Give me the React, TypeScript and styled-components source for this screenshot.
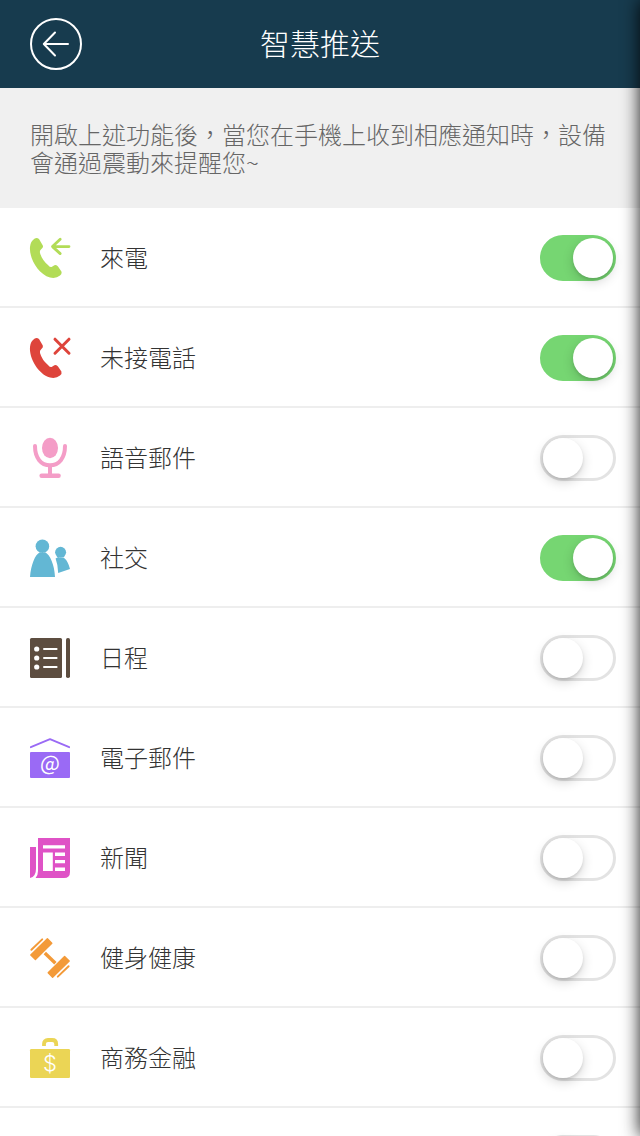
import React, { useState } from 'react';
import styled, { createGlobalStyle } from 'styled-components';

const GlobalStyle = createGlobalStyle`
  *, *::before, *::after { box-sizing: border-box; }
  body {
    margin: 0;
    background: #fff;
    font-family: "Noto Sans CJK TC", "Noto Sans", sans-serif;
    font-weight: 300;
    color: #333;
  }
`;

const Screen = styled.div`
  display: flex;
  flex-direction: column;
  height: 100vh;
  overflow: hidden;
`;

const Header = styled.header`
  flex: none;
  display: grid;
  grid-template-columns: 1fr auto 1fr;
  align-items: center;
  height: 88px;
  padding: 0 30px;
  background: #173b4e;
  color: #fff;
`;

const BackButton = styled.button`
  width: 52px;
  height: 52px;
  padding: 0;
  border: 0;
  background: none;
  color: inherit;
  cursor: pointer;
  svg { display: block; }
`;

const Title = styled.h1`
  margin: 0;
  padding-bottom: 4px;
  font-size: 30px;
  line-height: 44px;
  font-weight: 300;
`;

const Hint = styled.p`
  flex: none;
  margin: 0;
  min-height: 120px;
  padding: 32px 30px;
  background: #f0f0f0;
  color: #666;
  font-size: 24px;
  line-height: 28px;
`;

const List = styled.ul`
  flex: 1;
  min-height: 0;
  margin: 0;
  padding: 0;
  list-style: none;
  overflow-y: auto;
  scrollbar-width: none;
`;

const Row = styled.li`
  display: flex;
  align-items: center;
  height: 100px;
  padding: 2px 24px 0 30px;
  border-bottom: 2px solid #eee;
`;

const RowLabel = styled.label`
  flex: 1;
  display: flex;
  align-items: center;
  gap: 30px;
  font-size: 24px;
  line-height: 36px;
`;

const RowText = styled.span`
  padding-bottom: 2px;
`;

const Icon = styled.svg`
  flex: none;
  width: 40px;
  height: 40px;
  overflow: visible;
`;

const Switch = styled.input`
  appearance: none;
  flex: none;
  display: flex;
  width: 76px;
  height: 46px;
  margin: 0;
  padding: 0;
  border: 3px solid #e3e3e3;
  border-radius: 23px;
  background: #fff;
  cursor: pointer;

  &::before {
    content: "";
    width: 40px;
    height: 40px;
    border-radius: 50%;
    background: #fff;
    box-shadow: 0 4px 12px rgba(0, 0, 0, 0.16), 0 2px 3px rgba(0, 0, 0, 0.1);
  }

  &:checked {
    justify-content: flex-end;
    border-color: #76d672;
    background: #76d672;
  }
`;

const EdgeShadow = styled.div`
  position: fixed;
  top: 0;
  bottom: 0;
  left: 100%;
  width: 40px;
  box-shadow: 0 0 18px rgba(0, 0, 0, 0.9);
  pointer-events: none;
`;

const handset =
  'M3 2 Q6 -1.2 9 1 L12.8 7.6 Q13.6 9.6 11.4 11 Q9.4 12.4 10 15 Q12 22 18 27 Q20 30 22.4 28.4 L24.4 27.2 Q26.6 26.2 28 28.4 L31.4 33.6 Q32.2 35.6 30 37.6 Q26 41 20 39.6 C8 36 -1 20 0 9 Q0.5 4 3 2Z';

const icons = {
  call: (
    <g fill="#b2dc57">
      <path d={handset} />
      <path d="M39 8.6H22.5M30.2 1.2 22.5 8.6 30.2 15.6" fill="none" stroke="#b2dc57" strokeWidth="2.8" strokeLinecap="round" strokeLinejoin="round" />
    </g>
  ),
  missed: (
    <g fill="#de443b">
      <path d={handset} />
      <path d="M25 1.2 39 15.2M39 1.2 25 15.2" stroke="#de443b" strokeWidth="3" strokeLinecap="round" />
    </g>
  ),
  mic: (
    <g fill="none" stroke="#f49dc7" strokeLinecap="round">
      <ellipse cx="20" cy="10" rx="8" ry="10.2" fill="#f49dc7" stroke="none" />
      <path d="M5 8C5 20 11 27.3 20 27.3S35 20 35 8" strokeWidth="4" />
      <path d="M20 28v9" strokeWidth="4" />
      <path d="M11.6 37.8h17" strokeWidth="4.4" />
    </g>
  ),
  social: (
    <g fill="#63b7d4">
      <circle cx="12.4" cy="8.3" r="6.8" />
      <path d="M0 39C1 27 5 16.5 10 14.3Q12.5 15.8 15 14.3C20 16.5 24.5 27 25 39Z" />
      <circle cx="30.6" cy="14.3" r="5.5" />
      <path d="M25.6 20.5 28.2 18.9Q31 20.4 33.6 19.4 38.2 23 40 31L28.2 35Q28 27 25.6 20.5Z" />
    </g>
  ),
  schedule: (
    <g fill="#5d4d40">
      <rect width="32" height="40" rx="1.5" />
      <rect x="36" width="4" height="40" rx="1.8" />
      <g fill="#fff">
        <circle cx="6.7" cy="11" r="2.6" />
        <circle cx="6.7" cy="20" r="2.6" />
        <circle cx="6.7" cy="29" r="2.6" />
      </g>
      <path d="M14 11h12.6M14 20h12.6M14 29h12.6" stroke="#fff" strokeWidth="2" strokeLinecap="round" />
    </g>
  ),
  mail: (
    <g fill="#9a6af5">
      <path d="M.8 9.2 20 1.1 39.2 9.2" fill="none" stroke="#9a6af5" strokeWidth="1.8" strokeLinecap="round" strokeLinejoin="round" />
      <rect y="14" width="40" height="26" rx="1" />
      <text x="20" y="33" textAnchor="middle" fontFamily="Noto Sans CJK TC" fontSize="21" fontWeight="400" fill="#fff">@</text>
    </g>
  ),
  news: (
    <g fill="#df52c6">
      <path d="M0 9H6V31Q6 38.6 0 40Z" />
      <path d="M8 0H40V34Q40 40 34 40H5.6Q8 37.6 8 33Z" />
      <path d="M13 7.2h22v3.2H13zM13 14.6h9.8V33H13zM25 14.6h10V18H25zM25 22h10v3.2H25zM25 29.6h10V33H25z" fill="#fff" />
    </g>
  ),
  fitness: (
    <g fill="#f39a38" stroke="#f39a38">
      <path d="M.8 17 17.4.8 21.8 5.2 5.4 21.4ZM39.2 23 22.6 39.2 18.2 34.8 34.6 18.6Z" strokeWidth="1.4" strokeLinejoin="round" />
      <path d="M1.4 11.8 12.2 1.4M38.6 28.2 27.8 38.6" strokeWidth="2" strokeLinecap="round" />
      <path d="M14.8 15 25.4 25.2" strokeWidth="3.4" />
    </g>
  ),
  finance: (
    <g fill="#ebd555">
      <path d="M14 8V6Q14 2 18 2H22.2Q26.2 2 26.2 6V8" fill="none" stroke="#ebd555" strokeWidth="3.8" />
      <rect y="11" width="40" height="29" rx="1.2" />
      <text x="20" y="33" textAnchor="middle" fontFamily="Inter" fontSize="22" fontWeight="300" fill="#fff">$</text>
    </g>
  ),
};

type Item = { id: string; label?: string; icon?: keyof typeof icons; on?: boolean };

const items: Item[] = [
  { id: 'call', label: '來電', icon: 'call', on: true },
  { id: 'missed', label: '未接電話', icon: 'missed', on: true },
  { id: 'voicemail', label: '語音郵件', icon: 'mic' },
  { id: 'social', label: '社交', icon: 'social', on: true },
  { id: 'schedule', label: '日程', icon: 'schedule' },
  { id: 'mail', label: '電子郵件', icon: 'mail' },
  { id: 'news', label: '新聞', icon: 'news' },
  { id: 'fitness', label: '健身健康', icon: 'fitness' },
  { id: 'finance', label: '商務金融', icon: 'finance' },
  { id: 'other' },
];

function SettingRow({ item }: { item: Item }) {
  const [on, setOn] = useState(Boolean(item.on));
  return (
    <Row>
      <RowLabel htmlFor={item.id}>
        {item.icon && <Icon viewBox="0 0 40 40" aria-hidden="true">{icons[item.icon]}</Icon>}
        {item.label && <RowText>{item.label}</RowText>}
      </RowLabel>
      <Switch
        id={item.id}
        type="checkbox"
        role="switch"
        aria-label={item.label ?? '其他'}
        checked={on}
        onChange={(e) => setOn(e.target.checked)}
      />
    </Row>
  );
}

export default function App() {
  return (
    <Screen>
      <GlobalStyle />
      <Header>
        <BackButton type="button" aria-label="返回">
          <svg width="52" height="52" viewBox="0 0 52 52" fill="none" stroke="currentColor" strokeWidth="2">
            <circle cx="26" cy="26" r="25" />
            <path d="M38 26H14M25 14.5 13.8 26 25 37.5" strokeLinecap="round" strokeLinejoin="round" />
          </svg>
        </BackButton>
        <Title>智慧推送</Title>
      </Header>
      <Hint>開啟上述功能後，當您在手機上收到相應通知時，設備會通過震動來提醒您~</Hint>
      <List>
        {items.map((item) => (
          <SettingRow key={item.id} item={item} />
        ))}
      </List>
      <EdgeShadow />
    </Screen>
  );
}
